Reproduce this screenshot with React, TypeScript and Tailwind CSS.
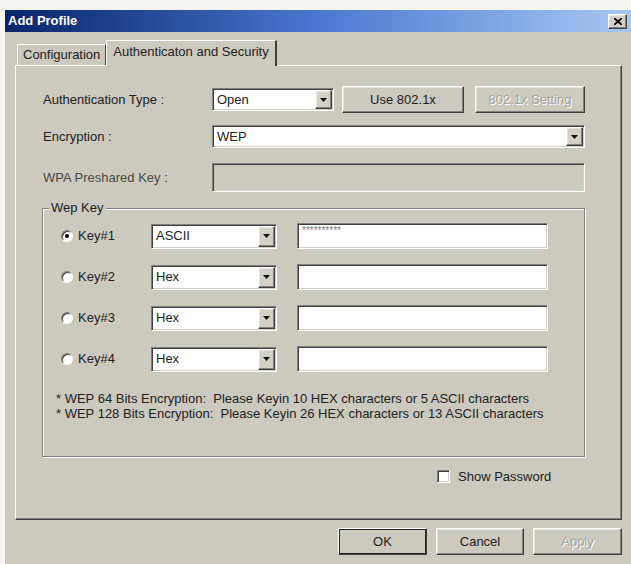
import React from "react";

const sunken =
  "border border-t-[#808080] border-l-[#808080] border-b-white border-r-white shadow-[inset_1px_1px_0_#404040,inset_-1px_-1px_0_#d4d0c8]";
const raised =
  "border border-t-white border-l-white border-b-[#404040] border-r-[#404040] shadow-[inset_-1px_-1px_0_#808080,inset_1px_1px_0_#e6e4dc]";

function Arrow() {
  return (
    <svg width="7" height="4" viewBox="0 0 7 4">
      <path d="M0 0h7L3.5 4z" fill="#111" />
    </svg>
  );
}

function Select(data: { value: string; className?: string }) {
  return (
    <div className={`${sunken} bg-white flex items-stretch p-[1px] ${data.className ?? ""}`}>
      <span className="flex-1 pl-[3px] flex items-center text-[13px] text-[#222]">{data.value}</span>
      <span className={`${raised} w-[17px] bg-[#d4d0c8] flex items-center justify-center`}>
        <Arrow />
      </span>
    </div>
  );
}

function Button(data: { label: string; disabled?: boolean; className?: string }) {
  return (
    <div
      className={`${raised} flex items-center justify-center text-[13px] ${
        data.disabled ? "text-[#a6a49c] [text-shadow:1px_1px_0_#fff]" : "text-[#222]"
      } ${data.className ?? ""}`}
    >
      {data.label}
    </div>
  );
}

function Radio(data: { checked?: boolean }) {
  return (
    <span className="w-[12px] h-[12px] rounded-full border border-t-[#808080] border-l-[#808080] border-b-white border-r-white bg-white shadow-[inset_1px_1px_0_#404040] flex items-center justify-center">
      {data.checked ? <span className="w-[4px] h-[4px] rounded-full bg-black" /> : null}
    </span>
  );
}

const keys = [
  { name: "Key#1", type: "ASCII", value: "**********", checked: true },
  { name: "Key#2", type: "Hex", value: "", checked: false },
  { name: "Key#3", type: "Hex", value: "", checked: false },
  { name: "Key#4", type: "Hex", value: "", checked: false },
];

export default function App() {
  return (
    <div className="w-[631px] h-[564px] bg-[#f4f4f0] pt-[10px] pl-[5px] overflow-hidden font-['Liberation_Sans',Arial,sans-serif]">
      <div className="h-[554px] flex flex-col bg-[#ccc9be]">
        {/* title bar */}
        <div className="h-[22px] flex items-center justify-between bg-gradient-to-r from-[#0a246a] via-[#4a78d0] to-[#a8c8f0] pl-[3px] pr-[4px]">
          <span className="text-white font-bold text-[13px]">Add Profile</span>
          <span className={`${raised} w-[19px] h-[15px] bg-[#d4d0c8] flex items-center justify-center`}>
            <svg width="8" height="7" viewBox="0 0 8 7">
              <path d="M0 0L8 7M8 0L0 7" stroke="#000" strokeWidth="1.8" />
            </svg>
          </span>
        </div>

        <div className="pl-[10px] pt-[8px] w-[617px]">
          {/* tabs */}
          <div className="flex items-end h-[25px] pl-[2px]">
            <div className="h-[21px] px-[5px] flex items-center text-[13px] text-[#222] border-t border-l border-t-white border-l-white border-r border-r-[#404040]">
              Configuration
            </div>
            <div className="relative z-10 h-[26px] -mb-[1px] px-[6px] pb-[4px] flex items-center bg-[#ccc9be] text-[13px] text-[#222] border-t border-l border-t-white border-l-white border-r-2 border-r-[#404040]">
              Authenticaton and Security
            </div>
          </div>

          {/* tab page */}
          <div className="h-[455px] border border-t-white border-l-white border-b-[#404040] border-r-[#404040] shadow-[inset_-1px_-1px_0_#808080] pl-[26px] pt-[20px] flex flex-col text-[13px] text-[#222]">
            <div className="flex items-center h-[27px]">
              <span className="w-[170px] pl-[1px]">Authentication Type :</span>
              <Select value="Open" className="w-[122px] h-[23px]" />
              <Button label="Use 802.1x" className="ml-[8px] w-[122px] h-[27px]" />
              <Button label="802.1x Setting" disabled className="ml-[11px] w-[110px] h-[27px]" />
            </div>

            <div className="flex items-center h-[23px] mt-[12px]">
              <span className="w-[170px] pl-[1px]">Encryption :</span>
              <Select value="WEP" className="w-[373px] h-[23px]" />
            </div>

            <div className="flex items-center h-[29px] mt-[15px]">
              <span className="w-[170px] pl-[1px] text-[#4a4a48]">WPA Preshared Key :</span>
              <div className={`${sunken} w-[373px] h-[29px] bg-[#ccc9be]`} />
            </div>

            {/* wep key group */}
            <div className="relative mt-[16px] w-[543px] h-[249px] border border-[#808080] shadow-[1px_1px_0_#fff,inset_1px_1px_0_#fff] pl-[18px] pt-[14px] flex flex-col">
              <span className="absolute -top-[9px] left-[6px] px-[2px] bg-[#ccc9be] leading-[15px]">Wep Key</span>
              <div className="flex flex-col gap-[15px]">
                {keys.map((k) => (
                  <div key={k.name} className="flex items-center h-[26px]">
                    <Radio checked={k.checked} />
                    <span className="ml-[5px] w-[73px]">{k.name}</span>
                    <Select value={k.type} className="w-[126px] h-[25px]" />
                    <div className={`${sunken} ml-[20px] w-[251px] h-[26px] bg-white px-[4px] pt-[1px] text-[10px] leading-[12px] text-[#777]`}>
                      {k.value}
                    </div>
                  </div>
                ))}
              </div>
              <div className="mt-[19px] -ml-[5px] leading-[15px] text-[13px] text-[#222]">
                <div>* WEP 64 Bits Encryption:&nbsp; Please Keyin 10 HEX characters or 5 ASCII characters</div>
                <div>* WEP 128 Bits Encryption:&nbsp; Please Keyin 26 HEX characters or 13 ASCII characters</div>
              </div>
            </div>

            <div className="flex items-center mt-[10px] pl-[395px]">
              <span className={`${sunken} w-[13px] h-[13px] bg-white`} />
              <span className="ml-[8px]">Show Password</span>
            </div>
          </div>

          {/* dialog buttons */}
          <div className="flex justify-end gap-[9px] mt-[8px]">
            <Button label="OK" className="w-[89px] h-[27px] border-[#222] outline outline-1 outline-[#222] -outline-offset-2" />
            <Button label="Cancel" className="w-[88px] h-[27px]" />
            <Button label="Apply" disabled className="w-[89px] h-[27px]" />
          </div>
        </div>
      </div>
    </div>
  );
}
